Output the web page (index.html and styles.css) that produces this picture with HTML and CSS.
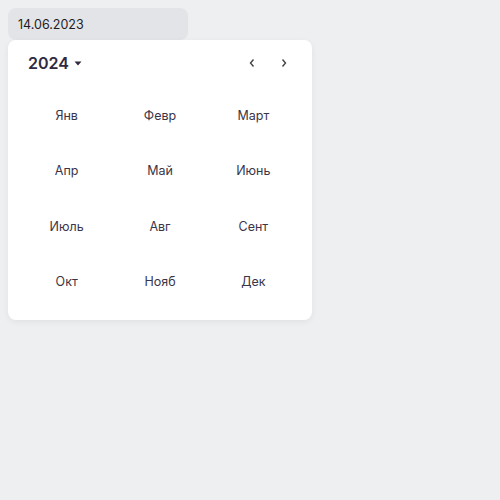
FILE: index.html
```html
<!DOCTYPE html>
<html lang="ru">
<head>
<meta charset="utf-8">
<link rel="stylesheet" href="styles.css">
</head>
<body>
<div class="picker">
  <div class="input">14.06.2023</div>
  <div class="popup">
    <div class="header">
      <div class="year">2024
        <svg class="caret" width="8" height="5" viewBox="0 0 8 5"><path d="M0.5 0.5h7L4 4.5z" fill="#2f2a3f"/></svg>
      </div>
      <div class="nav">
        <span class="btn"><svg width="8" height="10" viewBox="0 0 8 10"><path d="M5.5 1.5L2.5 5l3 3.5" fill="none" stroke="#444" stroke-width="1.4"/></svg></span>
        <span class="btn"><svg width="8" height="10" viewBox="0 0 8 10"><path d="M2.5 1.5L5.5 5l-3 3.5" fill="none" stroke="#444" stroke-width="1.4"/></svg></span>
      </div>
    </div>
    <div class="grid">
      <span>Янв</span><span>Февр</span><span>Март</span>
      <span>Апр</span><span>Май</span><span>Июнь</span>
      <span>Июль</span><span>Авг</span><span>Сент</span>
      <span>Окт</span><span>Нояб</span><span>Дек</span>
    </div>
  </div>
</div>
</body>
</html>
```
FILE: styles.css
```css
html, body { margin: 0; padding: 0; }
body {
  background: #eeeff1;
  width: 500px;
  height: 500px;
  font-family: Inter, "Noto Sans", sans-serif;
  color: #2f2a3f;
}
.picker { padding: 8px; width: 304px; }
.input {
  width: 180px;
  height: 32px;
  box-sizing: border-box;
  background: #e3e4e7;
  border-radius: 8px;
  padding: 0 10px;
  display: flex;
  align-items: center;
  font-size: 12.5px;
  color: #1f1d24;
}
.popup {
  background: #fff;
  border-radius: 8px;
  box-shadow: 0 2px 6px rgba(0,0,0,0.06);
  padding: 12px;
  height: 280px;
  box-sizing: border-box;
}
.header {
  display: flex;
  justify-content: space-between;
  align-items: center;
  height: 22px;
  margin-bottom: 14px;
}
.year {
  padding-left: 8px;
  font-size: 16px;
  font-weight: 600;
  display: flex;
  align-items: center;
  gap: 5px;
}
.nav { display: flex; }
.btn {
  width: 32px;
  height: 22px;
  display: flex;
  align-items: center;
  justify-content: center;
}
.grid {
  display: grid;
  grid-template-columns: repeat(3, 1fr);
  grid-template-rows: repeat(4, 55.33px);
  align-items: center;
  justify-items: center;
  font-size: 12.5px;
  color: #3a3548;
}
```
